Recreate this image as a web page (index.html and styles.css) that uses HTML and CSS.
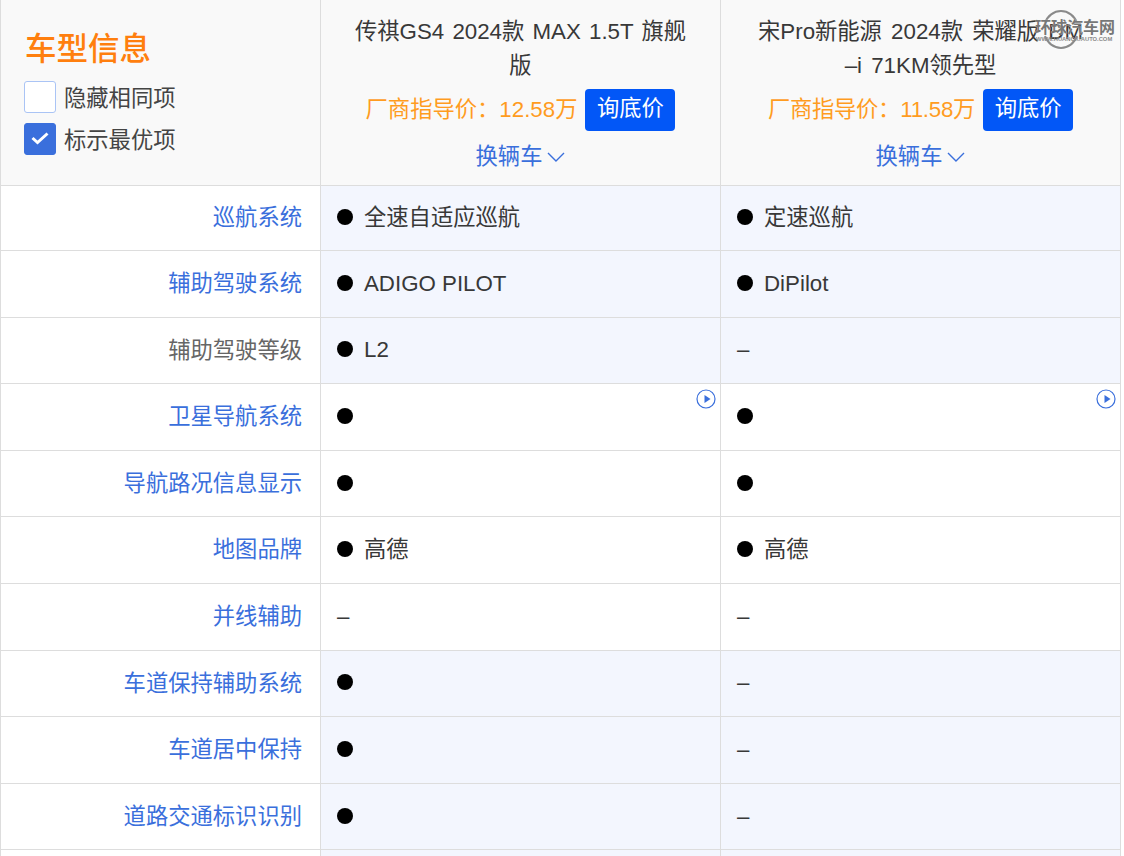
FILE: index.html
```html
<!DOCTYPE html>
<html lang="zh">
<head>
<meta charset="utf-8">
<title>车型对比</title>
<link rel="stylesheet" href="styles.css">
</head>
<body>
<div class="table">
  <div class="head-row">
    <div class="head-cell info">
      <div class="info-title">车型信息</div>
      <div class="check-row"><span class="box"></span><span class="check-text">隐藏相同项</span></div>
      <div class="check-row"><span class="box on"><svg width="20" height="16" viewBox="0 0 20 16"><path d="M2.5 7 L7.5 11.5 L17.5 2.5" fill="none" stroke="#fff" stroke-width="3"/></svg></span><span class="check-text">标示最优项</span></div>
    </div>
    <div class="head-cell car">
      <div class="car-name">传祺GS4 2024款 MAX 1.5T 旗舰版</div>
      <div class="price-row"><span class="price">厂商指导价：12.58万</span><span class="ask">询底价</span></div>
      <div class="swap"><span class="swap-text">换辆车</span><svg width="18" height="10" viewBox="0 0 18 10"><path d="M1 1 L9 9 L17 1" fill="none" stroke="#3a6fdc" stroke-width="1.4"/></svg></div>
    </div>
    <div class="head-cell car">
      <div class="car-name wide">宋Pro新能源 2024款 荣耀版 DM<br>–i 71KM领先型</div>
      <div class="price-row"><span class="price tight">厂商指导价：11.58万</span><span class="ask">询底价</span></div>
      <div class="swap"><span class="swap-text">换辆车</span><svg width="18" height="10" viewBox="0 0 18 10"><path d="M1 1 L9 9 L17 1" fill="none" stroke="#3a6fdc" stroke-width="1.4"/></svg></div>
    </div>
  </div>

  <div class="row diff first">
    <div class="label link">巡航系统</div>
    <div class="val"><i class="dot"></i>全速自适应巡航</div>
    <div class="val"><i class="dot"></i>定速巡航</div>
  </div>
  <div class="row diff">
    <div class="label link">辅助驾驶系统</div>
    <div class="val"><i class="dot"></i>ADIGO PILOT</div>
    <div class="val"><i class="dot"></i>DiPilot</div>
  </div>
  <div class="row diff">
    <div class="label">辅助驾驶等级</div>
    <div class="val"><i class="dot"></i>L2</div>
    <div class="val">–</div>
  </div>
  <div class="row">
    <div class="label link">卫星导航系统</div>
    <div class="val"><i class="dot"></i><svg class="play" width="20" height="20" viewBox="0 0 20 20"><circle cx="10" cy="10" r="9" fill="#fff" stroke="#3a6fdc" stroke-width="1.2"/><path d="M8.5 6 L14.5 10 L8.5 14 Z" fill="#3a6fdc"/></svg></div>
    <div class="val"><i class="dot"></i><svg class="play" width="20" height="20" viewBox="0 0 20 20"><circle cx="10" cy="10" r="9" fill="#fff" stroke="#3a6fdc" stroke-width="1.2"/><path d="M8.5 6 L14.5 10 L8.5 14 Z" fill="#3a6fdc"/></svg></div>
  </div>
  <div class="row">
    <div class="label link">导航路况信息显示</div>
    <div class="val"><i class="dot"></i></div>
    <div class="val"><i class="dot"></i></div>
  </div>
  <div class="row">
    <div class="label link">地图品牌</div>
    <div class="val"><i class="dot"></i>高德</div>
    <div class="val"><i class="dot"></i>高德</div>
  </div>
  <div class="row">
    <div class="label link">并线辅助</div>
    <div class="val">–</div>
    <div class="val">–</div>
  </div>
  <div class="row diff">
    <div class="label link">车道保持辅助系统</div>
    <div class="val"><i class="dot"></i></div>
    <div class="val">–</div>
  </div>
  <div class="row diff">
    <div class="label link">车道居中保持</div>
    <div class="val"><i class="dot"></i></div>
    <div class="val">–</div>
  </div>
  <div class="row diff">
    <div class="label link">道路交通标识识别</div>
    <div class="val"><i class="dot"></i></div>
    <div class="val">–</div>
  </div>
  <div class="row diff"><div class="label"></div><div class="val"></div><div class="val"></div></div>
</div>

<div class="watermark">
  <svg class="wm-ring" width="38" height="40" viewBox="0 0 38 40"><path d="M3 14 A17 18 0 0 1 35 14 M35 27 A17 18 0 0 1 3 27" fill="none" stroke="#8a8a8a" stroke-width="2"/></svg>
  <div class="wm-cn">环球汽车网</div>
  <div class="wm-en">WWW.HUANQIUAUTO.COM</div>
</div>
</body>
</html>
```

FILE: styles.css
```css
* { box-sizing: border-box; }
html, body { margin: 0; padding: 0; background: #fff; overflow: hidden; }
body {
  height: 856px;
  font-family: "Liberation Sans", "Noto Sans CJK SC", sans-serif;
  font-size: 22.3px;
  color: #383838;
}
.table {
  width: 1121px;
  height: 856px;
  overflow: hidden;
  border-left: 1px solid #ddd;
}
.head-row, .row {
  display: grid;
  grid-template-columns: 320px 400px 400px;
  grid-template-rows: minmax(0, 1fr);
}
.head-row {
  height: 186px;
  background: #f9f9f9;
  border-bottom: 1px solid #ddd;
}
.head-cell { border-right: 1px solid #ddd; }
.info { padding: 29px 0 0 23px; }
.info-title {
  font-size: 31.5px;
  font-weight: 500;
  line-height: 40px;
  color: #ff7f0e;
  margin-left: 1px;
  margin-bottom: 12px;
}
.check-row {
  display: flex;
  align-items: center;
  gap: 8px;
  height: 32px;
  line-height: 32px;
  margin-bottom: 10px;
  color: #444;
}
.check-text { margin-top: 4px; }
.box {
  width: 32px;
  height: 32px;
  border: 1px solid #aac4f5;
  border-radius: 3px;
  background: #fff;
  display: flex;
  align-items: center;
  justify-content: center;
}
.box.on { background: #3a6fdc; border-color: #3a6fdc; }
.car {
  padding: 15px 20px 0;
  text-align: center;
}
.car-name { line-height: 34px; height: 68px; padding: 0 10px; word-spacing: 2px; }
.car-name.wide { word-spacing: 3px; margin-left: -4px; margin-right: -4px; }
.price-row {
  display: flex;
  justify-content: center;
  align-items: center;
  gap: 8px;
  height: 42px;
  margin-top: 6px;
  line-height: 38px;
}
.price { color: #ff9c1f; }
.price.tight { letter-spacing: -0.25px; }
.ask {
  width: 90px;
  height: 42px;
  line-height: 40px;
  text-align: center;
  border-radius: 4px;
  background: #0257f7;
  color: #fff;
}
.swap {
  margin-top: 9px;
  line-height: 32px;
  color: #3a6fdc;
  display: flex;
  justify-content: center;
  align-items: center;
  gap: 5px;
}
.swap-text { margin-top: 1px; }
.row {
  height: 66.6px;
  border-bottom: 1px solid #ddd;
}
.row.first { height: 65px; }
.label {
  border-right: 1px solid #ddd;
  padding-right: 18px;
  text-align: right;
  line-height: 66px;
  color: #666;
  background: #fff;
}
.first .label { line-height: 64px; }
.label.link { color: #3a6fdc; }
.val {
  position: relative;
  border-right: 1px solid #ddd;
  padding-left: 16px;
  display: flex;
  align-items: center;
  line-height: 30px;
}
.diff .val { background: #f3f6fe; }
.dot {
  width: 16px;
  height: 16px;
  border-radius: 50%;
  background: #000;
  margin-right: 11px;
  margin-bottom: 2px;
  flex: none;
}
.play { position: absolute; top: 5px; right: 4px; }
.watermark {
  position: absolute;
  left: 1032px;
  top: 8px;
  width: 88px;
  height: 40px;
  pointer-events: none;
}
.wm-ring { position: absolute; left: 10px; top: 1px; }
.wm-cn {
  position: absolute;
  left: 3px;
  top: 10px;
  font-size: 16px;
  line-height: 20px;
  font-weight: 700;
  white-space: nowrap;
  color: #777;
  text-shadow: 0 0 1px #fff;
}
.wm-en {
  position: absolute;
  left: 4px;
  top: 27px;
  font-size: 5.8px;
  line-height: 8px;
  font-weight: 700;
  white-space: nowrap;
  color: #8a8a8a;
}
```
